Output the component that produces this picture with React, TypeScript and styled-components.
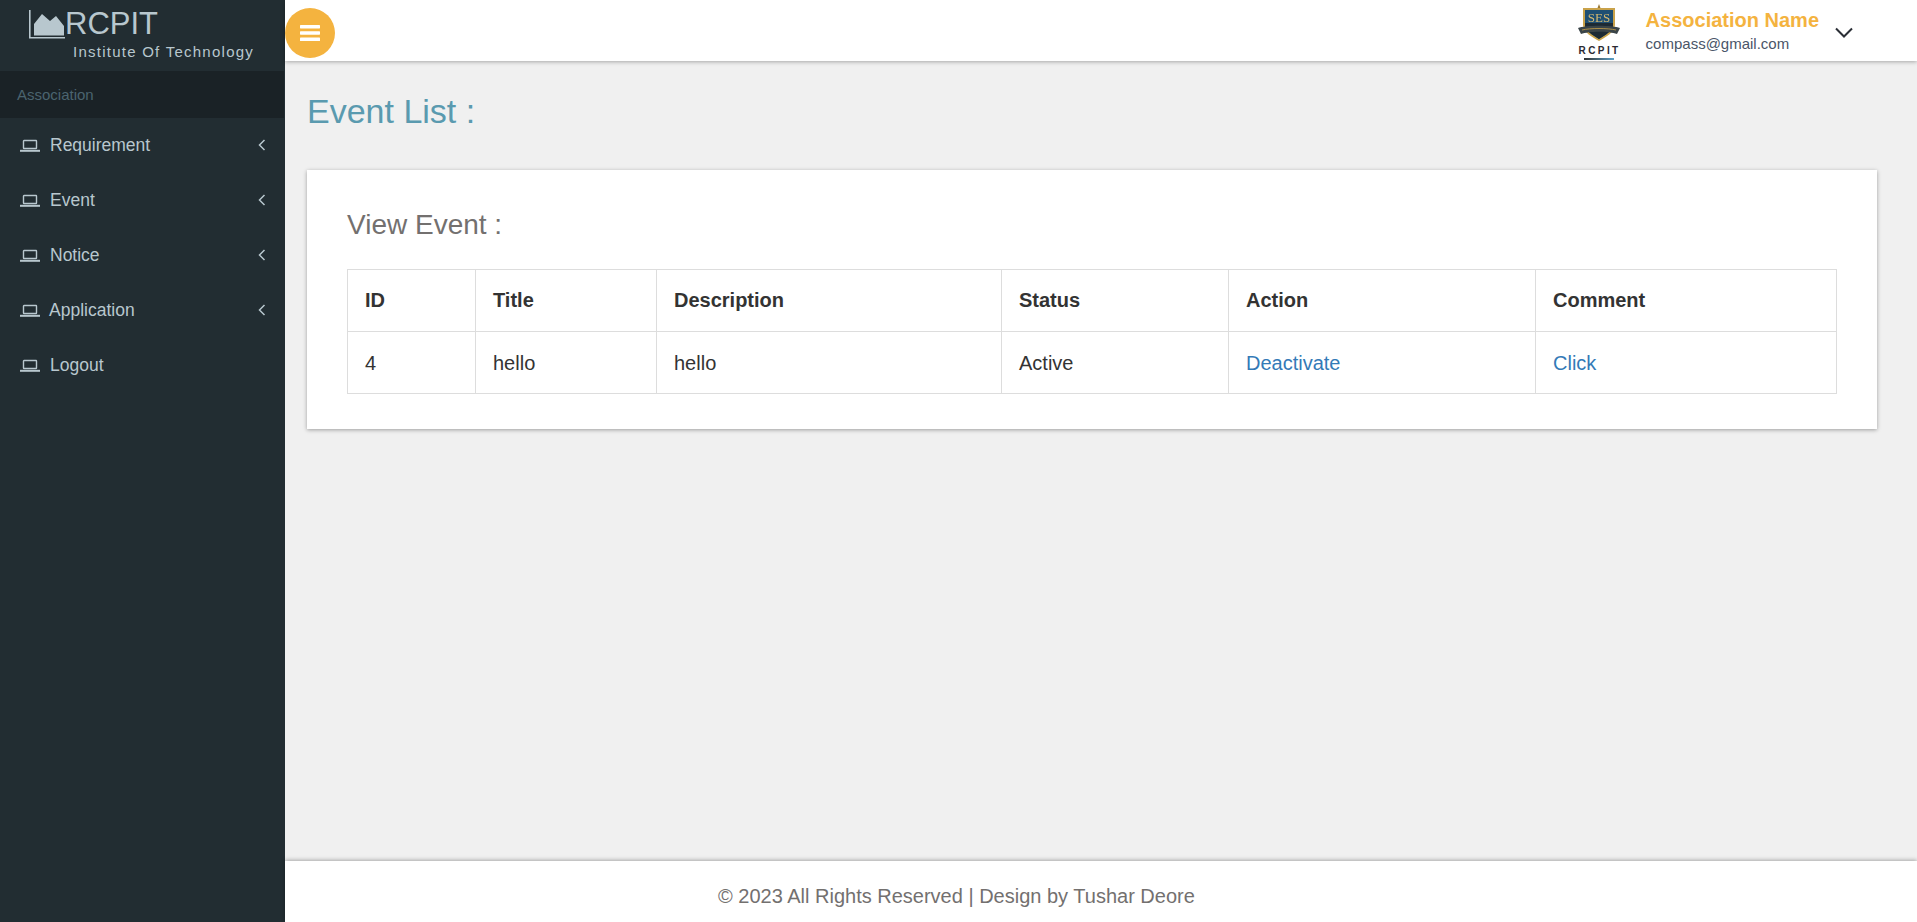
import React from 'react';
import styled, { createGlobalStyle } from 'styled-components';

const Global = createGlobalStyle`
  html, body {
    margin: 0;
    padding: 0;
    height: 100%;
    background: #f0f0f0;
    font-family: "Liberation Sans", Arial, sans-serif;
  }
  * { box-sizing: border-box; }
`;

const Page = styled.div`
  display: flex;
  height: 922px;
  overflow: hidden;
`;

const Sidebar = styled.aside`
  width: 285px;
  flex: none;
  background: #222d32;
  color: #b8c7ce;
`;

const Brand = styled.div`
  height: 71px;
  padding: 10px 0 0 29px;
`;

const BrandRow = styled.div`
  display: flex;
  align-items: flex-start;
  height: 28px;
`;

const BrandName = styled.span`
  font-size: 31px;
  line-height: 28px;
  margin-left: -1px;
`;

const BrandSub = styled.div`
  font-size: 15px;
  line-height: 16px;
  letter-spacing: 1.25px;
  margin: 6px 0 0 44px;
`;

const SectionLabel = styled.div`
  height: 47px;
  background: #1a2226;
  color: #4b646f;
  font-size: 15px;
  line-height: 47px;
  padding-left: 17px;
  margin-right: 1px;
`;

const Menu = styled.nav`
  display: flex;
  flex-direction: column;
`;

const MenuItem = styled.div`
  height: 55px;
  display: flex;
  align-items: center;
  padding: 0 19px 1px 20px;
  font-size: 17.5px;
`;

const MenuLabel = styled.span<{ $tight?: boolean }>`
  margin-left: ${(p) => (p.$tight ? '9px' : '10px')};
  flex: 1;
`;

const Main = styled.div`
  flex: 1;
  min-width: 0;
  display: flex;
  flex-direction: column;
`;

const Header = styled.header`
  height: 61px;
  flex: none;
  background: #fff;
  box-shadow: 0 1px 4px rgba(0, 0, 0, 0.3);
  display: flex;
  align-items: center;
  position: relative;
`;

const MenuButton = styled.button`
  width: 50px;
  height: 50px;
  margin-top: 5px;
  border: 0;
  padding: 0;
  border-radius: 50%;
  background: #f4b33f;
  display: flex;
  align-items: center;
  justify-content: center;
`;

const Profile = styled.div`
  margin-left: auto;
  display: flex;
  align-items: center;
  padding-right: 64px;
`;

const Crest = styled.div`
  width: 44px;
  display: flex;
  flex-direction: column;
  align-items: center;
  margin-right: 25px;
  padding-top: 2px;
`;

const CrestMarkWrap = styled.div`
  height: 38px;
  filter: blur(0.4px);
`;

const CrestText = styled.span`
  font-size: 10px;
  font-weight: 700;
  line-height: 11px;
  letter-spacing: 2.4px;
  margin: 3px -2px 2px 0;
  color: #2b2b33;
`;

const CrestLine = styled.span`
  width: 30px;
  height: 2px;
  background: linear-gradient(90deg, #333, #5aa0c8);
`;

const ProfileText = styled.div`
  margin-right: 16px;
`;

const ProfileName = styled.div`
  color: #f4b33f;
  font-size: 20px;
  font-weight: 700;
  line-height: 24px;
`;

const ProfileMail = styled.div`
  color: #4a5568;
  font-size: 15px;
  line-height: 18px;
  margin-top: 3px;
`;

const ChevronWrap = styled.div`
  display: flex;
  margin-top: 4px;
`;

const Content = styled.main`
  flex: 1;
  padding: 0 40px 0 22px;
`;

const PageTitle = styled.h1`
  margin: 31px 0 0;
  font-size: 34px;
  font-weight: 400;
  line-height: 38px;
  color: #5a9aaf;
`;

const Card = styled.section`
  margin-top: 40px;
  background: #fff;
  box-shadow: 0 1px 4px rgba(0, 0, 0, 0.35);
  padding: 40px;
  height: 259px;
`;

const CardTitle = styled.h2`
  margin: 0 0 29px;
  font-size: 28px;
  font-weight: 400;
  line-height: 30px;
  color: #73706f;
`;

const Table = styled.table`
  width: 100%;
  table-layout: fixed;
  border-collapse: collapse;
  font-size: 20px;
  color: #333;
`;

const Th = styled.th<{ $w: number }>`
  width: ${(p) => p.$w}px;
  height: 62px;
  border: 1px solid #ddd;
  padding: 0 17px;
  text-align: left;
  font-weight: 700;
`;

const Td = styled.td`
  height: 62px;
  border: 1px solid #ddd;
  padding: 2px 17px 0;
`;

const TableLink = styled.a`
  color: #337ab7;
  text-decoration: none;
`;

const Footer = styled.footer`
  height: 61px;
  flex: none;
  background: #fff;
  box-shadow: 0 -1px 4px rgba(0, 0, 0, 0.3);
  padding-left: 433px;
  font-size: 20px;
  line-height: 71px;
  color: #73706f;
  position: relative;
`;

const AreaIcon = () => (
  <svg width="37" height="29" viewBox="0 0 37 29" fill="none">
    <path d="M0.8 0v27.7H36" stroke="#b8c7ce" strokeWidth="1.6" />
    <path d="M5 25.5V14l8-10 8 7 6-5 8 10v9.5z" fill="#b8c7ce" />
  </svg>
);

const LaptopIcon = () => (
  <svg width="20" height="13" viewBox="0 0 20 13" fill="none" style={{ flex: 'none' }}>
    <rect x="3.5" y="1.5" width="13" height="8" stroke="#b8c7ce" strokeWidth="1.4" rx="0.5" />
    <rect x="0" y="10.8" width="20" height="2" fill="#b8c7ce" />
  </svg>
);

const AngleLeft = () => (
  <svg width="8" height="12" viewBox="0 0 8 12" fill="none">
    <path d="M6.5 1L1.5 6l5 5" stroke="#b8c7ce" strokeWidth="1.5" />
  </svg>
);

const ChevronDown = () => (
  <svg width="18" height="11" viewBox="0 0 18 11" fill="none">
    <path d="M1 1.5l8 8 8-8" stroke="#2b2f36" strokeWidth="2" />
  </svg>
);

const Bars = () => (
  <svg width="20" height="16" viewBox="0 0 20 16">
    <rect y="0" width="20" height="3.4" rx="0.6" fill="#fff" />
    <rect y="6.3" width="20" height="3.4" rx="0.6" fill="#fff" />
    <rect y="12.6" width="20" height="3.4" rx="0.6" fill="#fff" />
  </svg>
);

const CrestMark = () => (
  <svg width="44" height="38" viewBox="0 0 44 38">
    <path d="M22 0l1.5 4h-3z" fill="#9c7a35" />
    <path d="M6 4h32v17c0 7-9 12-16 16C15 33 6 28 6 21z" fill="#c9a24a" />
    <path d="M8 6h28v15c0 6-8 10-14 14-6-4-14-8-14-14z" fill="#1f4f73" />
    <path d="M8 19h28v2c0 6-8 10-14 14-6-4-14-8-14-14z" fill="#1d2a33" />
    <text
      x="22"
      y="18"
      textAnchor="middle"
      fontSize="13"
      fontFamily="Liberation Serif, serif"
      fill="#d6b970"
    >
      SES
    </text>
    <path d="M1 24c7-3 35-3 42 0l-3 6c-8-3-28-3-36 0z" fill="#3a4448" />
    <path d="M5 26c8-2 26-2 34 0" stroke="#c9a24a" strokeWidth="0.8" fill="none" />
  </svg>
);

const items = ['Requirement', 'Event', 'Notice', 'Application', 'Logout'];
const columns = [
  { label: 'ID', width: 128 },
  { label: 'Title', width: 181 },
  { label: 'Description', width: 345 },
  { label: 'Status', width: 227 },
  { label: 'Action', width: 307 },
  { label: 'Comment', width: 301 },
];

export default function App() {
  return (
    <Page>
      <Global />
      <Sidebar>
        <Brand>
          <BrandRow>
            <AreaIcon />
            <BrandName>RCPIT</BrandName>
          </BrandRow>
          <BrandSub>Institute Of Technology</BrandSub>
        </Brand>
        <SectionLabel>Association</SectionLabel>
        <Menu>
          {items.map((item) => (
            <MenuItem key={item}>
              <LaptopIcon />
              <MenuLabel $tight={item === 'Application'}>{item}</MenuLabel>
              {item !== 'Logout' && <AngleLeft />}
            </MenuItem>
          ))}
        </Menu>
      </Sidebar>
      <Main>
        <Header>
          <MenuButton>
            <Bars />
          </MenuButton>
          <Profile>
            <Crest>
              <CrestMarkWrap>
                <CrestMark />
              </CrestMarkWrap>
              <CrestText>RCPIT</CrestText>
              <CrestLine />
            </Crest>
            <ProfileText>
              <ProfileName>Association Name</ProfileName>
              <ProfileMail>compass@gmail.com</ProfileMail>
            </ProfileText>
            <ChevronWrap>
              <ChevronDown />
            </ChevronWrap>
          </Profile>
        </Header>
        <Content>
          <PageTitle>Event List :</PageTitle>
          <Card>
            <CardTitle>View Event :</CardTitle>
            <Table>
              <thead>
                <tr>
                  {columns.map((c) => (
                    <Th key={c.label} $w={c.width}>
                      {c.label}
                    </Th>
                  ))}
                </tr>
              </thead>
              <tbody>
                <tr>
                  <Td>4</Td>
                  <Td>hello</Td>
                  <Td>hello</Td>
                  <Td>Active</Td>
                  <Td>
                    <TableLink href="#">Deactivate</TableLink>
                  </Td>
                  <Td>
                    <TableLink href="#">Click</TableLink>
                  </Td>
                </tr>
              </tbody>
            </Table>
          </Card>
        </Content>
        <Footer>© 2023 All Rights Reserved | Design by Tushar Deore</Footer>
      </Main>
    </Page>
  );
}
